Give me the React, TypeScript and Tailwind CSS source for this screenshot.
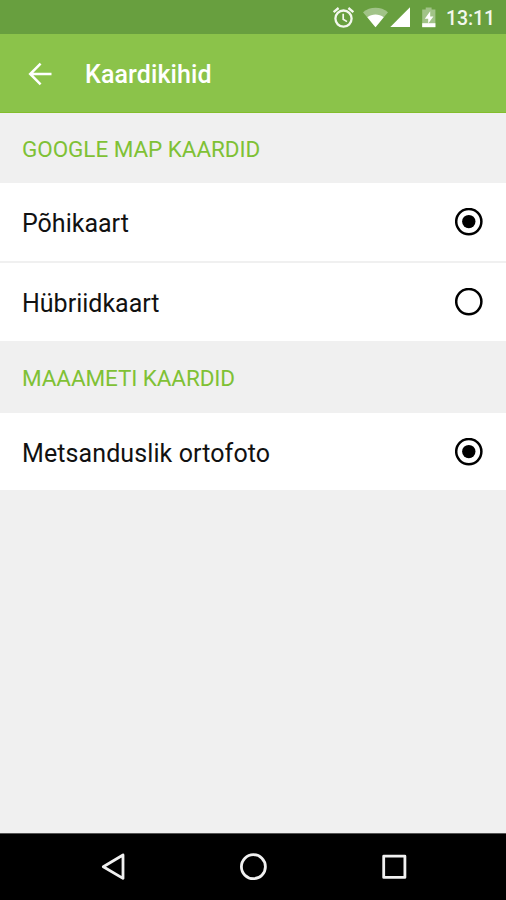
import React from 'react';

function StatusBar() {
  return (
    <div className="flex h-[34px] shrink-0 items-start bg-[#689f3f] pl-[326px]">
      <svg className="h-[34px] w-[120px] shrink-0" viewBox="0 0 120 34" fill="none">
        <circle cx="17.5" cy="18.6" r="8.1" stroke="#f3f8ee" strokeWidth="2.3" />
        <path d="M7.6 12.2 12.6 8M27.4 12.2 22.4 8" stroke="#f3f8ee" strokeWidth="2.3" />
        <path d="M17.2 13.8V19.2L21 21.6" stroke="#f3f8ee" strokeWidth="1.7" />
        <path d="M37 12.2C44 6.4 55 6.4 62 12.2L49.5 27.2Z" fill="#fff" fillOpacity=".38" />
        <path d="M41.3 17.2C46 13.7 53 13.7 57.7 17.2L49.5 27.2Z" fill="#fff" />
        <path d="M84 7.3V27H64.3Z" fill="#fff" />
        <path d="M96.2 9.6H99.7V7.4H105.6V9.6H109.4V27H96.2Z" fill="#fff" fillOpacity=".38" />
        <path d="M96.2 23.2H109.4V27.2H96.2Z" fill="#fff" />
        <path d="M104.2 11.2 98.8 18.8H102.2V23.6L107.4 16.4H104.2Z" fill="#fff" />
      </svg>
      <span className="mt-[7px] text-[19.5px] leading-6 font-medium tracking-[-0.1px] text-[#f3f8ee]">13:11</span>
    </div>
  );
}

function AppBar() {
  return (
    <header className="flex h-[79px] shrink-0 items-center border-b border-[#83be2c] bg-[#8bc34a] pl-[28px]">
      <svg className="mt-[1px] h-6 w-6 shrink-0" viewBox="0 0 24 24" fill="none" stroke="#fff" strokeWidth="2.5">
        <path d="M23.5 12H2.5M12.6 1.6 2.2 12 12.6 22.4" />
      </svg>
      <h1 className="mt-[4px] ml-[33px] text-[25px] leading-8 font-medium tracking-[0.1px] text-white">Kaardikihid</h1>
    </header>
  );
}

function Radio({ checked }: { checked: boolean }) {
  return (
    <svg className="h-7 w-7 shrink-0" viewBox="0 0 28 28" role="radio" aria-checked={checked}>
      <circle cx="13.8" cy="13.6" r="12.6" fill="none" stroke="#000" strokeWidth="2.5" />
      {checked && <circle cx="13.8" cy="13.6" r="6.7" fill="#000" />}
    </svg>
  );
}

function Row({ label, checked, className }: { label: string; checked: boolean; className: string }) {
  return (
    <div className={`flex shrink-0 items-center justify-between bg-white pr-[23px] pl-[22px] ${className}`}>
      <span className="mt-[3px] text-[25px] leading-8 text-[#111]">{label}</span>
      <Radio checked={checked} />
    </div>
  );
}

export default function App() {
  return (
    <div className="flex h-[900px] w-[506px] flex-col overflow-hidden bg-[#f0f0f0] font-[Roboto,sans-serif]">
      <StatusBar />
      <AppBar />
      <main className="flex grow flex-col">
        <h2 className="flex h-[70px] shrink-0 items-center pt-[3px] pl-[22px] text-[22.5px] tracking-[-0.06px] text-[#7fc135]">GOOGLE MAP KAARDID</h2>
        <Row label="Põhikaart" checked className="h-[78px]" />
        <Row label="Hübriidkaart" checked={false} className="mt-[2px] h-[78px]" />
        <h2 className="flex h-[72px] shrink-0 items-center pt-[4px] pl-[22px] text-[22.5px] tracking-[-0.1px] text-[#7fc135]">MAAAMETI KAARDID</h2>
        <Row label="Metsanduslik ortofoto" checked className="h-[77px] pt-px tracking-[0.1px]" />
      </main>
      <nav className="h-[67px] shrink-0 border-t border-[#555] bg-black">
        <svg className="h-[66px] w-[506px]" viewBox="0 834 506 66" fill="none" stroke="#f1f1f1" strokeWidth="2.8" strokeLinejoin="round">
          <path d="M123 855 103.3 866.7 123 878.4Z" />
          <circle cx="253.4" cy="866.7" r="12" />
          <rect x="383.7" y="856.2" width="21.2" height="21.2" />
        </svg>
      </nav>
    </div>
  );
}
